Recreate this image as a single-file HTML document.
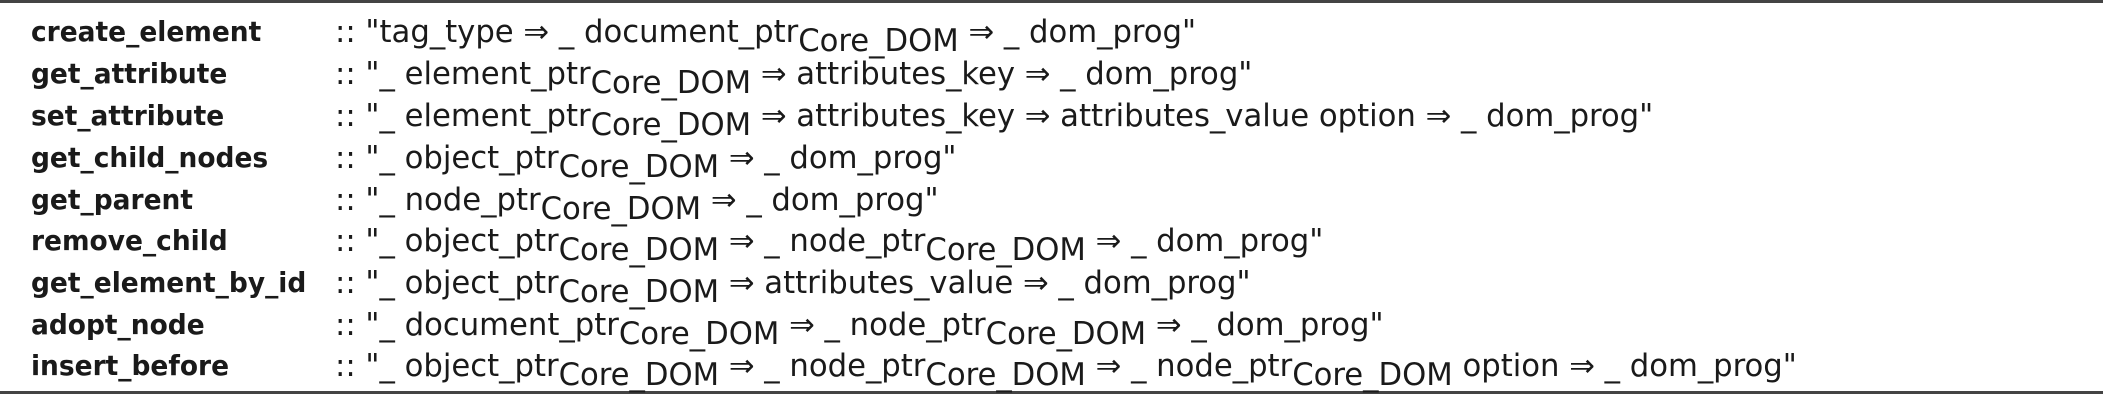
<!DOCTYPE html>
<html><head><meta charset="utf-8"><style>
html,body{margin:0;padding:0;background:#fff;}
body{width:2103px;height:403px;position:relative;overflow:hidden;font-family:"DejaVu Sans Condensed","Liberation Sans",sans-serif;color:#1a1a1a;}
.rule{position:absolute;left:0;width:2103px;background:#444;}
.r{position:absolute;left:31px;white-space:nowrap;line-height:30px;}
.n{position:absolute;left:0;font-weight:bold;font-size:28px;transform:scaleX(1.05);transform-origin:0 50%;}
.t{position:absolute;left:304px;font-size:31px;transform:scaleX(1.1);transform-origin:0 50%;}
sub{font-size:31px;vertical-align:-9px;line-height:0;}
</style></head><body>
<div class="rule" style="top:0;height:3px"></div>
<div class="rule" style="top:391px;height:3px"></div>
<div class="r" style="top:17px"><span class="n">create_element</span><span class="t">:: "tag_type ⇒ _ document_ptr<sub>Core_DOM</sub> ⇒ _ dom_prog"</span></div>
<div class="r" style="top:59px"><span class="n">get_attribute</span><span class="t">:: "_ element_ptr<sub>Core_DOM</sub> ⇒ attributes_key ⇒ _ dom_prog"</span></div>
<div class="r" style="top:101px"><span class="n">set_attribute</span><span class="t">:: "_ element_ptr<sub>Core_DOM</sub> ⇒ attributes_key ⇒ attributes_value option ⇒ _ dom_prog"</span></div>
<div class="r" style="top:143px"><span class="n">get_child_nodes</span><span class="t">:: "_ object_ptr<sub>Core_DOM</sub> ⇒ _ dom_prog"</span></div>
<div class="r" style="top:185px"><span class="n">get_parent</span><span class="t">:: "_ node_ptr<sub>Core_DOM</sub> ⇒ _ dom_prog"</span></div>
<div class="r" style="top:226px"><span class="n">remove_child</span><span class="t">:: "_ object_ptr<sub>Core_DOM</sub> ⇒ _ node_ptr<sub>Core_DOM</sub> ⇒ _ dom_prog"</span></div>
<div class="r" style="top:268px"><span class="n">get_element_by_id</span><span class="t">:: "_ object_ptr<sub>Core_DOM</sub> ⇒ attributes_value ⇒ _ dom_prog"</span></div>
<div class="r" style="top:310px"><span class="n">adopt_node</span><span class="t">:: "_ document_ptr<sub>Core_DOM</sub> ⇒ _ node_ptr<sub>Core_DOM</sub> ⇒ _ dom_prog"</span></div>
<div class="r" style="top:351px"><span class="n">insert_before</span><span class="t">:: "_ object_ptr<sub>Core_DOM</sub> ⇒ _ node_ptr<sub>Core_DOM</sub> ⇒ _ node_ptr<sub>Core_DOM</sub> option ⇒ _ dom_prog"</span></div>
</body></html>
